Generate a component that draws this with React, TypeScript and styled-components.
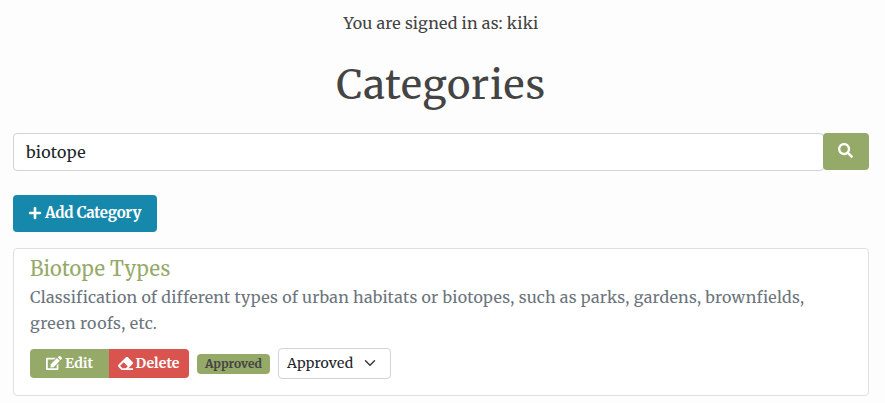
import React from 'react';
import styled, { createGlobalStyle } from 'styled-components';
import { FaPlus, FaSearch, FaEdit, FaEraser } from 'react-icons/fa';

const serif = `Merriweather, 'DejaVu Serif Condensed', 'DejaVu Serif', serif`;

const GlobalStyle = createGlobalStyle`
  *, *::before, *::after { box-sizing: border-box; }
  body {
    margin: 0;
    background: #fdfdfd;
    color: #444;
    font: 16px/26px ${serif};
    overflow: hidden;
  }
`;

const Page = styled.main`
  display: flex;
  flex-direction: column;
  align-items: flex-start;
  height: 403px;
  padding: 10px 16px 0 13px;
`;

const SignedIn = styled.p`
  align-self: center;
  margin: 0;
  font-size: 16px;
  white-space: nowrap;
`;

const Title = styled.h1`
  align-self: center;
  margin: 23px 0 0;
  font-size: 40px;
  font-weight: 400;
  line-height: 52px;
  height: 52px;
`;

const SearchBar = styled.form`
  display: flex;
  align-items: flex-start;
  width: 100%;
  margin-top: 22px;
`;

const SearchInput = styled.input`
  flex: 1;
  min-width: 0;
  height: 38px;
  padding: 0 12px;
  border: 1px solid #ced4da;
  border-radius: 4px;
  background: #fff;
  color: #212529;
  font: 16px/24px ${serif};
  letter-spacing: 0.3px;
  outline: none;
`;

const SearchButton = styled.button`
  display: flex;
  align-items: center;
  justify-content: center;
  width: 46px;
  height: 37px;
  margin-left: -1px;
  padding: 0 2px 2px 0;
  border: 0;
  border-radius: 4px;
  background: #95a969;
  color: #fff;
  font-size: 15px;
`;

const AddButton = styled.button`
  display: flex;
  align-items: center;
  gap: 3px;
  width: 144px;
  height: 37px;
  margin-top: 24px;
  padding: 0 0 2px 15px;
  border: 0;
  border-radius: 4px;
  background: #1688ac;
  color: #fff;
  font: bold 15px/24px ${serif};
  white-space: nowrap;
`;

const Card = styled.article`
  width: 100%;
  height: 148px;
  margin-top: 16px;
  padding: 7px 16px;
  border: 1px solid #dfdfdf;
  border-radius: 4px;
  background: #fff;
`;

const CardTitle = styled.h2`
  margin: 0;
  height: 28px;
  color: #95a969;
  font-size: 20px;
  font-weight: 400;
  line-height: 26px;
`;

const Description = styled.p`
  margin: 0;
  color: #6c757d;
  white-space: nowrap;
`;

const Actions = styled.div`
  display: flex;
  align-items: center;
  gap: 8px;
  margin-top: 12px;
`;

const ButtonGroup = styled.div`
  display: flex;
  border-radius: 4px;
  overflow: hidden;
`;

const ActionButton = styled.button<{ $danger?: boolean }>`
  display: flex;
  align-items: center;
  justify-content: center;
  gap: ${p => (p.$danger ? 2 : 3)}px;
  width: ${p => (p.$danger ? 80 : 79)}px;
  height: 29px;
  padding: 0 0 1px;
  border: 0;
  background: ${p => (p.$danger ? '#d9534f' : '#95a969')};
  color: #fff;
  font: bold 14px/20px ${serif};
  white-space: nowrap;
`;

const Badge = styled.span`
  display: flex;
  align-items: center;
  justify-content: center;
  width: 73px;
  height: 20px;
  border-radius: 4px;
  background: #95a969;
  color: #444;
  font-size: 12px;
  font-weight: 700;
  line-height: 18px;
`;

const StatusSelect = styled.button`
  display: flex;
  align-items: center;
  justify-content: space-between;
  width: 113px;
  height: 31px;
  padding: 0 14px 1px 8px;
  border: 1px solid #ced4da;
  border-radius: 4px;
  background: #fff;
  color: #212529;
  font: 14px/20px ${serif};
`;

const Label = styled.span<{ $track?: number }>`
  letter-spacing: ${p => p.$track ?? 0}px;
`;

export default function App() {
  return (
    <>
      <GlobalStyle />
      <Page>
        <SignedIn><Label $track={0.21}>You are signed in as: kiki</Label></SignedIn>
        <Title><Label $track={0.75}>Categories</Label></Title>
        <SearchBar onSubmit={e => e.preventDefault()}>
          <SearchInput defaultValue="biotope" aria-label="Search categories" />
          <SearchButton aria-label="Search"><FaSearch /></SearchButton>
        </SearchBar>
        <AddButton><FaPlus size={14} /><Label $track={-0.25}>Add Category</Label></AddButton>
        <Card>
          <CardTitle><Label $track={0.2}>Biotope Types</Label></CardTitle>
          <Description>
            <Label $track={0.245}>Classification of different types of urban habitats or biotopes, such as parks, gardens, brownfields,</Label>
            <br />
            <Label $track={0.33}>green roofs, etc.</Label>
          </Description>
          <Actions>
            <ButtonGroup>
              <ActionButton><FaEdit size={16} /><Label>Edit</Label></ActionButton>
              <ActionButton $danger><FaEraser size={15} /><Label $track={0.1}>Delete</Label></ActionButton>
            </ButtonGroup>
            <Badge><Label>Approved</Label></Badge>
            <StatusSelect>
              <Label $track={0.2}>Approved</Label>
              <svg width="12" height="12" viewBox="0 0 16 16" fill="none" stroke="#343a40" strokeWidth="2" strokeLinecap="round" strokeLinejoin="round">
                <path d="m2 5 6 6 6-6" />
              </svg>
            </StatusSelect>
          </Actions>
        </Card>
      </Page>
    </>
  );
}
